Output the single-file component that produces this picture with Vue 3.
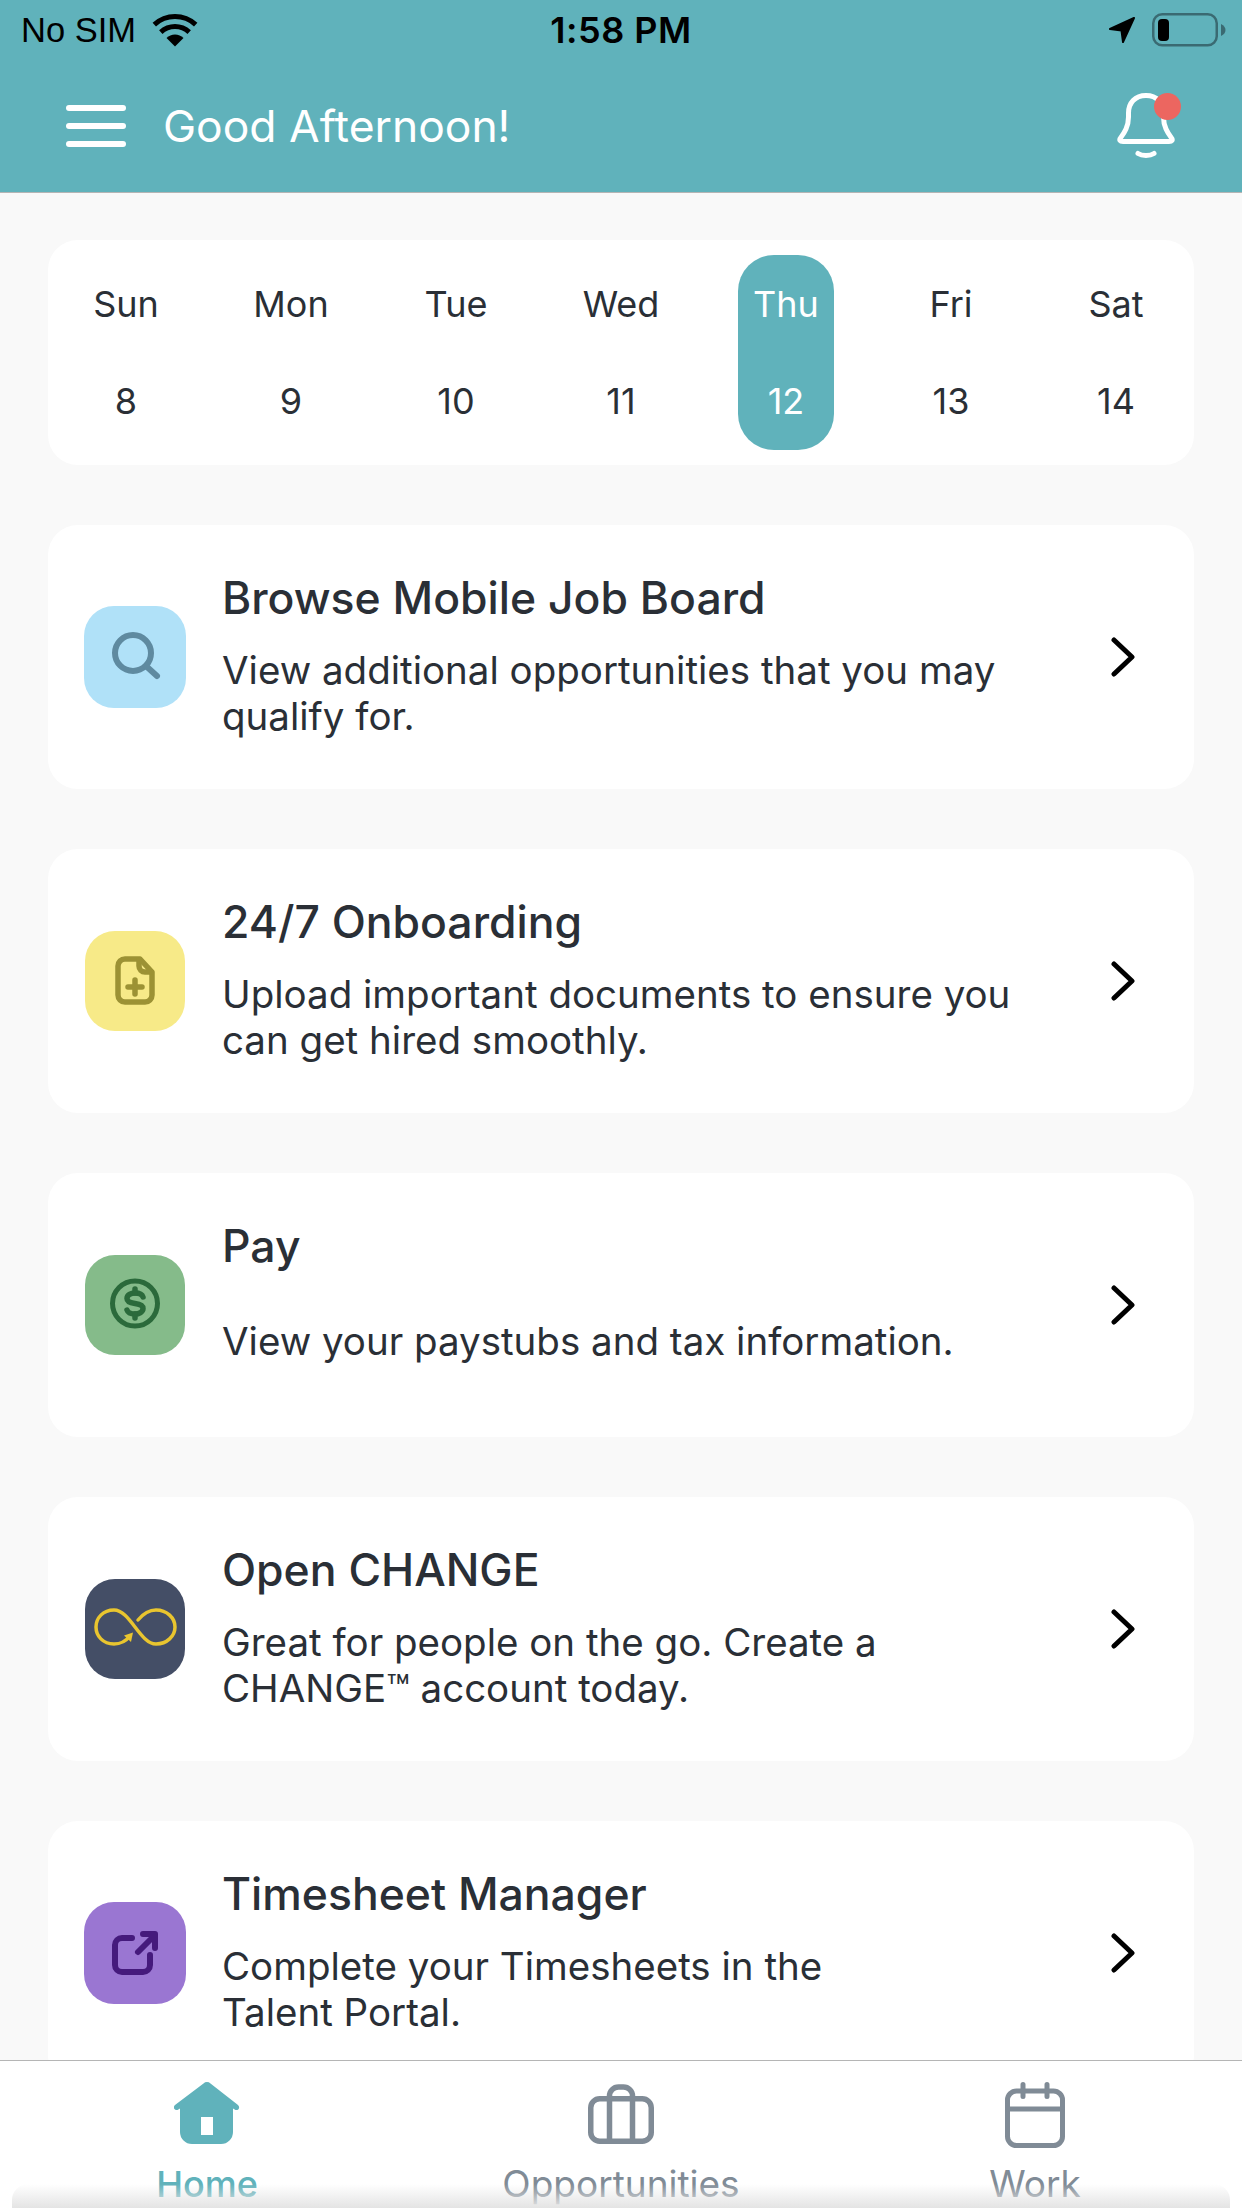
<script setup>
const days = [
  { name: 'Sun', num: 8 },
  { name: 'Mon', num: 9 },
  { name: 'Tue', num: 10 },
  { name: 'Wed', num: 11 },
  { name: 'Thu', num: 12, active: true },
  { name: 'Fri', num: 13 },
  { name: 'Sat', num: 14 },
];

const cards = [
  { title: 'Browse Mobile Job Board', desc: 'View additional opportunities that you may\nqualify for.', icon: 'search' },
  { title: '24/7 Onboarding', desc: 'Upload important documents to ensure you\ncan get hired smoothly.', icon: 'doc' },
  { title: 'Pay', desc: 'View your paystubs and tax information.', icon: 'pay' },
  { title: 'Open CHANGE', desc: 'Great for people on the go. Create a\nCHANGE™ account today.', icon: 'change' },
  { title: 'Timesheet Manager', desc: 'Complete your Timesheets in the\nTalent Portal.', icon: 'time' },
];
</script>

<template>
  <div class="phone">
    <header class="header">
      <div class="status-bar">
        <div class="status-left">
          <span>No SIM</span>
          <svg class="wifi" viewBox="0 0 46 34">
            <path d="M23 33.500 14.500 25a12 12 0 0 1 17 0z" fill="#000" />
            <path d="M10.500 21a18 18 0 0 1 25 0l3.400-3.800a23.500 23.500 0 0 0-31.800 0z" fill="#000" />
            <path d="M4 13.500a27.500 27.500 0 0 1 38 0l3.400-3.800a33 33 0 0 0-44.800 0z" fill="#000" />
          </svg>
        </div>
        <span class="status-time">1:58 PM</span>
        <div class="status-right">
          <svg class="locate" viewBox="0 0 28 28">
            <path d="M26 2 2 13l11.500 1.500L15 26z" fill="#000" stroke="#000" stroke-width="2" stroke-linejoin="round" />
          </svg>
          <svg class="battery" viewBox="0 0 74 34">
            <rect x="1.250" y="1.250" width="63.500" height="31" rx="9" fill="none" stroke="#3a6a72" stroke-width="2.500" />
            <rect x="6" y="6" width="11" height="22" rx="4" fill="#000" />
            <path d="M69 11c3 1.500 4.500 3.500 4.500 6s-1.500 4.500-4.500 6z" fill="#3a6a72" />
          </svg>
        </div>
      </div>
      <div class="nav-bar">
        <div class="burger"><i></i><i></i><i></i></div>
        <h1 class="greeting">Good Afternoon!</h1>
        <div class="bell">
          <svg viewBox="0 0 58 66" fill="none" stroke="#fff" stroke-width="5" stroke-linecap="round" stroke-linejoin="round">
            <path d="M29 2.500C18 2.500 11.500 10 11.500 20v4C11.500 34 7 40 3.500 45 2 47 3 48.500 6 48.500h46c3 0 4-1.500 2.500-3.500C51 40 46.500 34 46.500 24v-4C46.500 10 40 2.500 29 2.500z" />
            <path d="M21 60.500c4 2.700 12 2.700 16 0" />
          </svg>
          <span class="bell-dot"></span>
        </div>
      </div>
    </header>

    <main class="content">
      <section class="calendar">
        <div v-for="d in days" :key="d.name" :class="['day', { active: d.active }]">
          <span>{{ d.name }}</span>
          <span class="day-num">{{ d.num }}</span>
        </div>
      </section>

      <article v-for="c in cards" :key="c.title" class="card">
        <div :class="['icon-box', c.icon]">
          <svg v-if="c.icon === 'search'" viewBox="0 0 102 102" fill="none" stroke="#5f8aa0" stroke-width="6" stroke-linecap="round">
            <circle cx="49" cy="47" r="18" />
            <path d="M62 60l11 10" />
          </svg>
          <svg v-else-if="c.icon === 'doc'" viewBox="0 0 100 100" fill="none" stroke="#9c9234" stroke-width="5.500" stroke-linecap="round" stroke-linejoin="round">
            <path d="M40 28h15l12 13v23a7 7 0 0 1-7 7H40a7 7 0 0 1-7-7V35a7 7 0 0 1 7-7z" />
            <path d="M54 29v6a6 6 0 0 0 6 6h6" />
            <path d="M50 49v14M43 56h14" />
          </svg>
          <svg v-else-if="c.icon === 'pay'" viewBox="0 0 100 100" fill="none" stroke="#2b6a3b" stroke-linecap="round" stroke-linejoin="round">
            <circle cx="50" cy="48.500" r="22.500" stroke-width="5" />
            <path d="M58 42c-1-3-4-4-8-4s-8 2-8 5.500 4 4.500 8 5 8 1.500 8 5-4 5.500-8 5.500-7-1-8-4" stroke-width="5.500" />
            <path d="M50 34v4M50 59v4" stroke-width="5.500" />
          </svg>
          <svg v-else-if="c.icon === 'change'" viewBox="0 0 100 100" fill="none" stroke="#e9c52f" stroke-width="3.500" stroke-linecap="round">
            <path d="M53 41c5-6 11-10 18-10 11 0 19 8 19 17s-8 17-19 17C55 65 45 31 29 31 18 31 11 39 11 48s7 17 18 17c7 0 12-3 16-8" />
            <path d="M48 53.500l-9 3 7 6.500z" fill="#e9c52f" stroke="none" />
          </svg>
          <svg v-else viewBox="0 0 102 102" fill="none" stroke="#451a7c" stroke-width="6" stroke-linecap="round" stroke-linejoin="round">
            <path d="M48 36H38a7 7 0 0 0-7 7v20a7 7 0 0 0 7 7h21a7 7 0 0 0 7-7V53" />
            <path d="M54 50l16-16" />
            <path d="M59 32h12v14" />
          </svg>
        </div>
        <div class="card-text">
          <h2>{{ c.title }}</h2>
          <p><span>{{ c.desc }}</span></p>
        </div>
        <svg class="chevron" viewBox="0 0 26 40" fill="none" stroke="#000" stroke-width="5" stroke-linecap="round" stroke-linejoin="round">
          <path d="M4 3l18 17L4 37" />
        </svg>
      </article>
    </main>

    <nav class="tabbar">
      <div class="tab current">
        <svg viewBox="0 0 66 62">
          <path d="M29.500 1.500a5 5 0 0 1 7 0L64 23c2.500 2.500.5 5.500-2.500 5L59 26.500V50a12 12 0 0 1-12 12H18A12 12 0 0 1 6 50V26.500L3.500 28c-3 .5-5-2.500-2.500-5z" fill="#60b2bb" />
          <rect x="27" y="35" width="12" height="18" fill="#fff" />
        </svg>
        <span>Home</span>
      </div>
      <div class="tab">
        <svg viewBox="0 0 66 62" fill="none" stroke="#808b96" stroke-width="5.500" stroke-linejoin="round">
          <rect x="2.750" y="16.750" width="60.500" height="42.500" rx="9" />
          <path d="M21.500 17v-3a9 9 0 0 1 9-9h5a9 9 0 0 1 9 9v3M21.500 17v42M44.500 17v42" />
        </svg>
        <span>Opportunities</span>
      </div>
      <div class="tab">
        <svg class="tab-cal" viewBox="0 0 60 66" fill="none" stroke="#808b96" stroke-width="5" stroke-linecap="round" stroke-linejoin="round">
          <rect x="2.500" y="9" width="55" height="54.500" rx="9" />
          <path d="M2.500 27h55M18 2.500v12M42 2.500v12" />
        </svg>
        <span>Work</span>
      </div>
      <div class="home-fade"></div>
    </nav>
  </div>
</template>

<style scoped>
.phone {
  display: flex;
  flex-direction: column;
  width: 1242px;
  height: 2208px;
  overflow: hidden;
  background: #f9f9f9;
  color: #2a2f36;
  font-family: Inter, "Noto Sans", sans-serif;
}

.header {
  flex: none;
  height: 193px;
  box-sizing: border-box;
  border-bottom: 1px solid #b5b5b5;
  background: #60b2bb;
}

.status-bar {
  position: relative;
  display: flex;
  align-items: center;
  justify-content: space-between;
  height: 60px;
  padding: 0 16px 0 21px;
  color: #000;
  font-family: "Liberation Sans", sans-serif;
  font-size: 34.500px;
}

.status-left,
.status-right {
  display: flex;
  align-items: center;
}

.wifi {
  width: 46px;
  height: 34px;
  margin-left: 16px;
}

.status-time {
  position: absolute;
  left: 0;
  right: 0;
  text-align: center;
  font-family: Inter, sans-serif;
  font-weight: 600;
  font-size: 36px;
  letter-spacing: 0.5px;
}

.locate {
  width: 28px;
  height: 28px;
}

.battery {
  width: 74px;
  height: 34px;
  margin-left: 16px;
}

.nav-bar {
  display: flex;
  align-items: center;
  height: 132px;
  padding: 0 67px 0 66px;
  color: #fff;
}

.burger {
  display: flex;
  flex-direction: column;
  gap: 12px;
  width: 60px;
}

.burger i {
  display: block;
  height: 6px;
  border-radius: 3px;
  background: #fff;
}

.greeting {
  flex: 1;
  margin: 0 0 0 37px;
  font-size: 44.400px;
  font-weight: 400;
}

.bell {
  position: relative;
  width: 58px;
  height: 66px;
}

.bell svg {
  display: block;
  width: 58px;
  height: 66px;
}

.bell-dot {
  position: absolute;
  top: 0;
  right: -6px;
  width: 27px;
  height: 27px;
  border-radius: 50%;
  background: #ec6660;
}

.content {
  flex: 1;
  min-height: 0;
  overflow: hidden;
  padding: 47px 48px 0;
}

.calendar {
  display: flex;
  justify-content: space-between;
  height: 225px;
  box-sizing: border-box;
  padding: 15px 30px;
  border-radius: 30px;
  background: #fff;
  margin-bottom: 60px;
}

.day {
  display: flex;
  flex-direction: column;
  align-items: center;
  width: 96px;
  border-radius: 36px;
  padding-top: 29px;
  font-size: 36px;
  line-height: 40px;
}

.day-num {
  margin-top: 57px;
}

.day.active {
  background: #60b2bb;
  color: #fff;
}

.card {
  display: flex;
  align-items: center;
  height: 264px;
  box-sizing: border-box;
  margin-bottom: 60px;
  padding: 0 58px 0 36px;
  border-radius: 30px;
  background: #fff;
}

.icon-box {
  flex: none;
  width: 102px;
  height: 102px;
  border-radius: 30px;
}

.icon-box svg {
  display: block;
  width: 100%;
  height: 100%;
}

.search { background: #b0e1f8; }
.doc { background: #f7ea88; }
.pay { background: #85bb8a; }
.change { background: #444e66; }
.time { background: #9a76d2; }

.doc,
.pay,
.change {
  width: 100px;
  height: 100px;
  margin: 0 1px;
}

.card-text {
  flex: 1;
  min-width: 0;
  margin-left: 36px;
  padding-bottom: 3px;
}

.card-text h2 {
  margin: 0 0 23px;
  font-size: 44.500px;
  font-weight: 500;
  line-height: 52px;
}

.card-text p {
  display: flex;
  align-items: center;
  height: 92px;
  margin: 0;
  font-size: 38.500px;
  line-height: 46px;
  white-space: pre-line;
}

.chevron {
  flex: none;
  width: 26px;
  height: 40px;
}

.tabbar {
  position: relative;
  flex: none;
  display: grid;
  grid-template-columns: repeat(3, 1fr);
  height: 148px;
  box-sizing: border-box;
  border-top: 1px solid #b5b5b5;
  background: #fff;
  overflow: hidden;
}

.tab {
  display: flex;
  flex-direction: column;
  align-items: center;
  padding-top: 21px;
  color: #808b96;
  font-size: 37px;
  line-height: 44px;
}

.tab svg {
  display: block;
  width: 66px;
  height: 62px;
  margin-bottom: 18px;
}

.tab .tab-cal {
  width: 60px;
  height: 66px;
  margin-bottom: 14px;
}

.tab.current {
  color: #60b2bb;
  font-size: 36px;
  font-weight: 500;
}

.home-fade {
  position: absolute;
  left: 12px;
  right: 12px;
  bottom: 0;
  height: 24px;
  border-radius: 16px 16px 0 0;
  background: linear-gradient(rgba(225, 225, 225, 0), #e4e4e4);
  pointer-events: none;
}
</style>

<style>
html,
body {
  margin: 0;
  background: #f9f9f9;
}
</style>
